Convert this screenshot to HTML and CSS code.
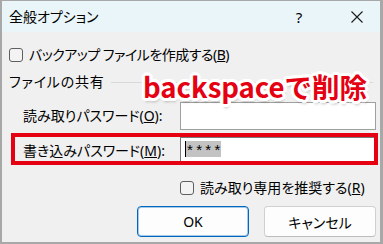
FILE: index.html
```html
<!DOCTYPE html>
<html lang="ja">
<head>
<meta charset="utf-8">
<link rel="stylesheet" href="styles.css">
</head>
<body>
<div class="dialog">
  <div class="titlebar">
    <span class="title">全般オプション</span>
    <span class="tb-btn help">?</span>
    <span class="tb-btn close"><svg width="12" height="12" viewBox="0 0 12 12"><path d="M0.5 0.5 L11.5 11.5 M11.5 0.5 L0.5 11.5" stroke="#1a1a1a" stroke-width="1.1" fill="none"/></svg></span>
  </div>
  <div class="content">
    <div class="check first"><span class="box"></span><span class="tight">バックアップ ファイルを作成する(<u>B</u>)</span></div>
    <div class="group-head"><span class="loose">ファイルの共有</span><span class="rule"></span></div>
    <div class="field-row"><span class="label">読み取りパスワード(<u>O</u>):</span><span class="input"></span></div>
    <div class="field-row second"><span class="label">書き込みパスワード(<u>M</u>):</span><span class="input focused"><span class="caret"></span><span class="sel">****</span></span></div>
    <div class="check readonly"><span class="box"></span><span>読み取り専用を推奨する(<u>R</u>)</span></div>
    <div class="buttons"><button class="btn default">OK</button><button class="btn">キャンセル</button></div>
  </div>
  <div class="highlight"></div>
  <div class="callout">backspaceで削除</div>
</div>
</body>
</html>
```

FILE: styles.css
```css
html, body {
  margin: 0;
  padding: 0;
  background: #f0f0f0;
}
body {
  font-family: "Noto Sans", "Noto Sans CJK JP", sans-serif;
  font-feature-settings: "palt";
  font-size: 14px;
  color: #000;
}
.dialog {
  position: relative;
  width: 383px;
  height: 244px;
  box-sizing: border-box;
  border-style: solid;
  border-color: #a8a8a8;
  border-width: 1px 3px 2px 2px;
  background: #f0f0f0;
  overflow: hidden;
}
.titlebar {
  height: 31px;
  background: #e9f5f8;
  display: flex;
  align-items: center;
  padding-left: 7px;
}
.title {
  flex: 1;
  font-size: 14px;
  line-height: 20px;
}
.tb-btn {
  width: 46px;
  height: 31px;
  display: flex;
  align-items: center;
  justify-content: center;
}
.help {
  margin-right: 12px;
  font-size: 15px;
  font-family: "Noto Sans", sans-serif;
}
.content {
  padding: 0 4px 0 7px;
}
.check {
  display: flex;
  align-items: center;
  gap: 6px;
  line-height: 20px;
  height: 20px;
}
.check.first {
  margin-top: 13px;
}
.tight {
  letter-spacing: -0.5px;
}
.loose {
  letter-spacing: 0.8px;
}
.check.readonly {
  margin-top: 13px;
  margin-left: 171px;
}
.box {
  width: 12px;
  height: 12px;
  border: 1px solid #5f5f5f;
  border-radius: 3px;
  background: #f3f3f3;
  flex: none;
}
.group-head {
  display: flex;
  align-items: center;
  margin-top: 7px;
  height: 20px;
  line-height: 20px;
}
.rule {
  flex: 1;
  height: 1px;
  background: #d9d9d9;
  margin: 0 3px 0 6px;
}
.field-row {
  display: flex;
  align-items: center;
  padding-left: 14px;
  margin-top: 10px;
  height: 28px;
}
.field-row.second {
  margin-top: 7px;
}
.label {
  flex: 0 0 157px;
  line-height: 20px;
}
.input {
  flex: 1;
  height: 28px;
  box-sizing: border-box;
  border: 1px solid #a0a0a0;
  background: #fff;
  display: flex;
  align-items: flex-start;
  padding: 3px 0 0 4px;
}
.input.focused {
  border-color: #7a7a7a;
}
.caret {
  width: 1px;
  height: 16px;
  background: #000;
}
.sel {
  height: 16px;
  width: 35px;
  background: #c3c3c3;
  font-family: "Liberation Sans", sans-serif;
  font-size: 15px;
  line-height: 17px;
  letter-spacing: 3.3px;
  padding-left: 1px;
  box-sizing: border-box;
  white-space: nowrap;
}
.buttons {
  display: flex;
  justify-content: flex-end;
  gap: 15px;
  margin-top: 8px;
}
.btn {
  width: 112px;
  height: 31px;
  box-sizing: border-box;
  border: 1px solid #d0d0d0;
  border-bottom-color: #bcbcbc;
  border-radius: 4px;
  background: #fdfdfd;
  font-family: "Noto Sans", "Noto Sans CJK JP", sans-serif;
  font-feature-settings: "palt";
  font-size: 14px;
  color: #000;
  padding: 0;
}
.btn.default {
  border: 1px solid #0067c0;
  box-shadow: inset 0 0 0 1px rgba(0, 103, 192, 0.35);
}
.highlight {
  position: absolute;
  left: 9px;
  top: 132px;
  width: 367px;
  height: 32px;
  box-sizing: border-box;
  border: 4px solid #e50012;
}
.callout {
  position: absolute;
  left: 141px;
  top: 67px;
  font-family: "Noto Sans CJK JP", sans-serif;
  font-feature-settings: normal;
  font-weight: 700;
  font-size: 27.5px;
  line-height: 36px;
  color: #e50012;
  white-space: nowrap;
  text-shadow:
    3px 0 0 #fff, -3px 0 0 #fff, 0 3px 0 #fff, 0 -3px 0 #fff,
    2px 2px 0 #fff, -2px 2px 0 #fff, 2px -2px 0 #fff, -2px -2px 0 #fff,
    3px 1px 0 #fff, -3px 1px 0 #fff, 3px -1px 0 #fff, -3px -1px 0 #fff,
    1px 3px 0 #fff, -1px 3px 0 #fff, 1px -3px 0 #fff, -1px -3px 0 #fff,
    1px 4px 3px rgba(0, 0, 0, 0.25);
}
```
